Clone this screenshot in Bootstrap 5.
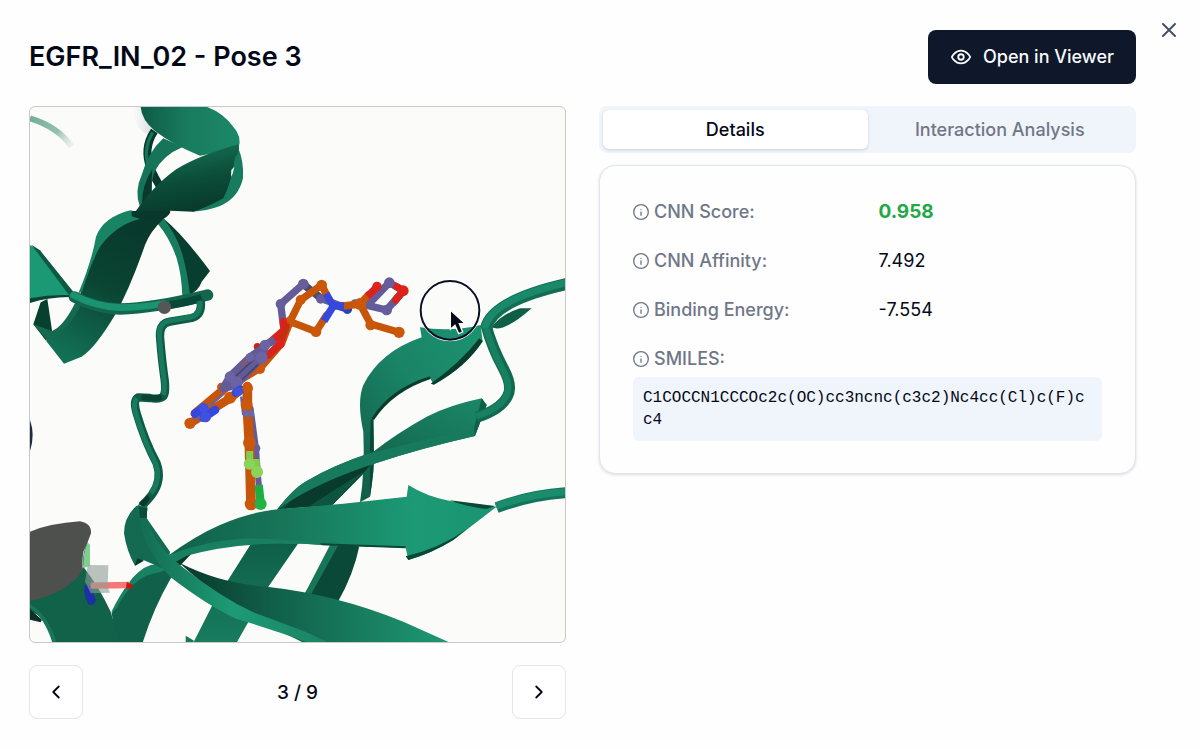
<!DOCTYPE html>
<html lang="en">
<head>
<meta charset="utf-8">
<meta name="viewport" content="width=device-width, initial-scale=1">
<title>EGFR_IN_02 - Pose 3</title>
<link href="https://cdn.jsdelivr.net/npm/bootstrap@5.3.0/dist/css/bootstrap.min.css" rel="stylesheet">
<style>
  body { font-family: Inter, "Liberation Sans", sans-serif; font-size: 18px; line-height: 27px; color: #020817; background: #fefefe; }
  svg.ico { fill: none; stroke: currentColor; stroke-width: 2; stroke-linecap: round; stroke-linejoin: round; flex: none; }
  .pose-dialog { padding: 30px 64px 30px 29px; }
  .pose-title { font-size: 27px; line-height: 32px; font-weight: 600; }
  .btn { font-size: 18px; line-height: 28px; font-weight: 500; }
  .btn-viewer { --bs-btn-color: #f8fafc; --bs-btn-bg: #0f172a; --bs-btn-hover-color: #fff; --bs-btn-hover-bg: #1e293b; padding: 12px 21px; border-radius: 8px; gap: 11px; }
  .btn-x { top: 18px; right: 19px; padding: 0; color: #475063; border: 0; width: 24px; height: 24px; line-height: 0; }
  .pose-body { display: grid; grid-template-columns: 1fr 1fr; gap: 33px; margin-top: 22px; align-items: start; }
  .scene { aspect-ratio: 1; border: 1px solid #c9cac5; border-radius: 6px; background: #fbfbf9; overflow: hidden; }
  .scene svg { display: block; width: 100%; height: 100%; }
  .pager { margin-top: 22px; font-size: 19px; font-weight: 500; }
  .btn-step { width: 54px; height: 54px; padding: 0; border: 1px solid #e2e4ee; border-radius: 8px; color: #020817; background: #fff; }
  .pose-tabs { background: #f0f4fb; border-radius: 8px; padding: 4px; }
  .pose-tabs .nav-link { padding: 6px 12px; line-height: 27px; font-weight: 500; color: #6f7787; border-radius: 6px; }
  .pose-tabs .nav-link.active { color: #020817; background: #fff; box-shadow: 0 1px 3px rgba(15,23,42,.16); }
  .facts { margin-top: 12px; padding: 32px 33px; border: 1px solid #e0e5ec; border-radius: 16px; background: #fefefe; box-shadow: 0 1px 3px rgba(15,23,42,.14); }
  .facts dl { display: grid; grid-template-columns: 1fr 1fr; gap: 22px; }
  .facts dt { font-weight: 500; color: #6f7787; gap: 5px; }
  .facts dd { margin: 0; }
  .facts .good { color: #22a845; font-size: 19px; font-weight: 700; }
  .facts .wide { grid-column: 1 / -1; }
  .smiles { margin-top: -17px !important; padding: 10px; border-radius: 6px; background: #f0f4fb; }
  .smiles code { display: block; font: 16px/22px "Liberation Mono", monospace; color: #020817; word-break: break-all; }
  @media (max-width: 760px) { .pose-body { grid-template-columns: 1fr; } }
</style>
</head>
<body>
<main class="pose-dialog position-relative">
  <button class="btn btn-x position-absolute" type="button" aria-label="Close">
    <svg class="ico" width="24" height="24" viewBox="0 0 24 24"><path d="M18 6 6 18M6 6l12 12"/></svg>
  </button>
  <header class="d-flex align-items-center justify-content-between">
    <h1 class="pose-title mb-0">EGFR_IN_02 - Pose 3</h1>
    <button class="btn btn-viewer d-flex align-items-center" type="button">
      <svg class="ico" width="22" height="22" viewBox="0 0 24 24"><path d="M2 12s3-7 10-7 10 7 10 7-3 7-10 7-10-7-10-7Z"/><circle cx="12" cy="12" r="3"/></svg>
      Open in Viewer
    </button>
  </header>

  <div class="pose-body">
    <section>
      <div class="scene">
        <svg viewBox="30 36 1605 1605" role="img" aria-label="Docked ligand in protein pocket">
          <defs>
            <linearGradient id="fade" x1="30" y1="60" x2="158" y2="155" gradientUnits="userSpaceOnUse"><stop stop-color="#6fae98"/><stop offset=".6" stop-color="#94bfb1"/><stop offset="1" stop-color="#d9dde0" stop-opacity=".3"/></linearGradient>
            <linearGradient id="top"><stop stop-color="#0d5c45"/><stop offset=".45" stop-color="#187a5d"/><stop offset="1" stop-color="#1b8967"/></linearGradient>
            <linearGradient id="diag" x1="0" y1=".1" x2=".25" y2="1"><stop stop-color="#167457"/><stop offset=".5" stop-color="#0c4f3b"/><stop offset="1" stop-color="#08382a"/></linearGradient>
            <linearGradient id="low" x1=".7" y1="0" x2=".3" y2="1"><stop stop-color="#08382b"/><stop offset=".5" stop-color="#0a4433"/><stop offset="1" stop-color="#127055"/></linearGradient>
            <linearGradient id="arrow"><stop stop-color="#0f6149"/><stop offset=".35" stop-color="#177558"/><stop offset=".75" stop-color="#1c9a75"/><stop offset="1" stop-color="#1a9370"/></linearGradient>
            <linearGradient id="sweep"><stop stop-color="#08382a"/><stop offset=".35" stop-color="#116049"/><stop offset="1" stop-color="#1e9974"/></linearGradient>
            <linearGradient id="band"><stop stop-color="#136b51"/><stop offset=".5" stop-color="#1d9a75"/><stop offset="1" stop-color="#1a8365"/></linearGradient>
            <linearGradient id="mid" x1="0" y1="1" x2="1" y2="0"><stop stop-color="#0d553f"/><stop offset=".5" stop-color="#15694f"/><stop offset="1" stop-color="#1b8868"/></linearGradient>
            <linearGradient id="down" x1="0" y1="0" x2="0" y2="1"><stop stop-color="#0f5f48"/><stop offset="1" stop-color="#187c5f"/></linearGradient>
            <linearGradient id="leaf" x1="0" y1="1" x2="1" y2="0"><stop stop-color="#115c46"/><stop offset=".55" stop-color="#1a8466"/><stop offset="1" stop-color="#1b9370"/></linearGradient>
            <linearGradient id="puff"><stop stop-color="#e2e5ea" stop-opacity="0"/><stop offset="1" stop-color="#d3d8df"/></linearGradient>
          </defs>

          <!-- far strands fading into fog -->
          <path d="M30 70Q115 96 155 155" fill="none" stroke="url(#fade)" stroke-width="18"/>
          <path d="M335 36h28q8 42 42 72l-30 8q-35-30-40-80Z" fill="url(#puff)"/>

          <!-- upper helix -->
          <path d="M403 108Q368 160 392 222Q408 255 422 278" fill="none" stroke="#07382b" stroke-width="24"/>
          <path d="M398 112Q368 160 386 218" fill="none" stroke="#157358" stroke-width="10"/>
          <path d="M430 130L488 156Q430 180 405 228Q393 255 395 302L360 335Q342 290 365 240Q385 170 430 130Z" fill="#167558"/>
          <path d="M397 222Q366 270 366 325L395 300V250Z" fill="#08392c"/>
          <path d="M362 36Q365 75 405 108Q460 150 540 182L655 160Q668 125 638 93Q610 55 562 36Z" fill="url(#top)"/>
          <path d="M655 160Q672 200 669 250Q655 310 600 333Q560 348 515 350L612 300Q630 240 632 175Z" fill="#177b5d"/>
          <path d="M335 366Q400 270 470 222Q540 180 655 148Q662 170 645 188Q635 260 610 310Q560 338 520 350L450 347Q400 378 350 374Z" fill="url(#diag)"/>
          <path d="M633 245L634 225L643 215L638 236Z" fill="#fbfbf9"/>

          <!-- lower helix -->
          <path d="M430 370Q490 420 570 528L545 560Q535 590 505 600L480 480Q460 430 430 370Z" fill="#083e2f"/>
          <path d="M412 385Q450 430 470 490Q485 540 487 604L510 600Q502 530 487 478Q470 420 430 370Z" fill="#187c5e"/>
          <path d="M335 348L450 347Q455 355 430 372Q390 410 375 450Q330 580 285 660Q225 760 185 785L132 806L78 737Q140 715 180 600Q215 480 235 440Q280 370 335 348Z" fill="url(#low)"/>
          <path d="M335 345Q250 365 228 425Q215 500 175 595L186 590Q215 500 240 455Q290 388 360 372L335 364Z" fill="#198463"/>
          <path d="M62 622L82 612L96 706L78 737L40 688Z" fill="#08402f"/>
          <path d="M40 688L96 708Q130 695 165 625L188 622Q145 710 82 737Z" fill="#14694f"/>
          <path d="M30 450L60 468L158 592L150 605Q90 600 30 612Z" fill="#1b9974"/>
          <path d="M34 449L60 466L160 590L147 600Z" fill="#0d5943"/>
          <path d="M30 610Q90 598 150 600V606Q80 608 30 624Z" fill="#0a4434"/>
          <path d="M163 606Q230 640 300 642Q400 640 563 600" fill="none" stroke="#12664d" stroke-width="34" stroke-linecap="round"/>
          <path d="M160 601Q230 636 300 638Q370 636 430 626" fill="none" stroke="#1b9370" stroke-width="20" stroke-linecap="round"/>
          <path d="M450 630Q510 620 545 608" fill="none" stroke="#094736" stroke-width="24"/>
          <circle cx="433" cy="637" r="20" fill="#555756"/>

          <!-- hanging loop -->
          <g fill="none" stroke-linejoin="round">
            <path d="M542 616Q548 660 515 669L450 680Q418 685 420 725Q425 790 432 840Q440 890 430 904Q420 914 390 909L355 907Q338 915 350 955Q375 1040 410 1105Q428 1155 395 1200Q380 1220 365 1232" stroke="#0f5a45" stroke-width="25"/>
            <path d="M540 618Q544 656 514 666L449 677Q415 684 418 725Q423 790 430 840Q437 887 429 899M350 910Q338 925 347 955Q372 1040 407 1105Q424 1153 393 1195" stroke="#177a5d" stroke-width="15"/>
            <path d="M425 906Q410 912 365 906" stroke="#0a4333" stroke-width="16"/>
          </g>

          <!-- right strand pair -->
          <path d="M1200 697Q1290 712 1382 690L1388 740Q1340 810 1240 868L1230 848Q1120 885 1060 965Q1062 1050 1062 1100Q1058 1160 1050 1205L1020 1222Q1035 1130 1030 1010Q1010 920 1030 870Q1080 770 1205 727Z" fill="url(#leaf)"/>
          <path d="M1388 738Q1340 815 1242 869L1232 866Q1320 805 1378 730ZM1230 844Q1110 880 1055 970L1062 975Q1120 888 1232 852Z" fill="#083d2e"/>
          <path d="M1052 975Q1048 1080 1050 1205L1060 1130Q1062 1050 1060 970Z" fill="#0a4836"/>
          <path d="M1385 910L1400 930L1365 1023Q1200 1060 1060 1107L940 1227L770 1245Q820 1180 860 1158Q940 1110 1060 1070Q1130 1015 1220 965Q1290 930 1385 910Z" fill="url(#mid)"/>
          <path d="M1055 1108L935 1232L790 1240Q850 1170 1055 1108Z" fill="#093b2c"/>
          <path d="M1030 1130L935 1232H870Z" fill="#0e5540"/>
          <path d="M775 1240Q820 1180 860 1158Q940 1110 1060 1072L1365 1000V1023Q1200 1060 1060 1107Q900 1160 800 1225Z" fill="#187a5c"/>
          <path d="M1385 910L1400 930L1365 1023L1362 1000Z" fill="#0f6049"/>
          <path d="M1370 967Q1440 945 1462 905Q1480 875 1450 820Q1415 755 1398 690" fill="none" stroke="#11694f" stroke-width="33"/>
          <path d="M1370 963Q1437 942 1458 904Q1475 875 1447 821Q1412 755 1396 690" fill="none" stroke="#178061" stroke-width="20"/>
          <path d="M1415 697Q1450 715 1535 640L1500 640Q1440 660 1415 697Z" fill="#0f5f48"/>
          <path d="M1640 567Q1415 618 1398 700" fill="none" stroke="#126d52" stroke-width="36"/>
          <path d="M1640 563Q1411 614 1394 700" fill="none" stroke="#19896a" stroke-width="22"/>

          <!-- strands running down behind the arrow -->
          <path d="M940 1350L1018 1354Q1000 1440 955 1518L855 1495Z" fill="#0a4937"/>
          <path d="M930 1350H955L872 1500L855 1495Z" fill="#177658"/>
          <path d="M695 1343L835 1345L745 1475L650 1643H520L580 1525Z" fill="url(#down)"/>
          <path d="M497 1622L522 1637L518 1643H497Z" fill="#177658"/>
          <path d="M450 1430Q390 1390 335 1455Q300 1500 275 1555L290 1643H368Q400 1540 455 1445Z" fill="#10604a"/>
          <path d="M450 1420Q395 1385 338 1448Q300 1495 273 1553L290 1540Q340 1440 420 1432Z" fill="#198263"/>
          <path d="M445 1395L520 1370L480 1412L600 1500L450 1430Z" fill="#083829"/>
          <path d="M478 1403Q600 1465 740 1475Q950 1498 1150 1580L1290 1643H850Q600 1520 478 1403Z" fill="url(#sweep)"/>
          <path d="M440 1385Q530 1320 600 1290Q700 1245 810 1240L970 1226L1160 1205L1165 1170Q1220 1205 1290 1218L1430 1235L1300 1335Q1235 1375 1165 1395L1157 1358L910 1350Q680 1330 500 1380L465 1400Z" fill="url(#arrow)"/>
          <path d="M440 1383Q560 1335 690 1330Q800 1335 960 1342L905 1350Q680 1333 500 1382L465 1402Z" fill="#188060"/>
          <path d="M1165 1395Q1235 1375 1300 1335L1340 1303Q1260 1360 1157 1384ZM900 1345L1157 1354V1360L905 1351ZM1290 1216L1425 1233L1400 1242Q1340 1236 1280 1213Z" fill="#0a4736"/>
          <path d="M350 1232Q312 1265 312 1315Q320 1370 345 1412L370 1395L440 1425L450 1370L380 1270L382 1232Z" fill="#136a50"/>
          <path d="M345 1412L352 1390L372 1397ZM355 1228L383 1200L390 1212L372 1236Z" fill="#08382a"/>
          <path d="M355 1230L382 1238L380 1268L400 1320Q430 1372 490 1418Q600 1505 700 1552L860 1612L925 1643H865Q760 1604 650 1572Q560 1530 450 1445Q365 1360 350 1235Z" fill="url(#band)"/>
          <path d="M357 1235L382 1240L380 1268L360 1270Z" fill="#0b4b39"/>
          <path d="M1430 1238Q1530 1200 1640 1193" fill="none" stroke="#14735a" stroke-width="33"/>
          <path d="M1428 1234Q1530 1197 1640 1190" fill="none" stroke="#1a8e6c" stroke-width="21"/>

          <!-- near clipped surface and axis gizmo -->
          <path d="M190 1415Q240 1480 272 1550L300 1643H105Q80 1560 30 1550V1515Q150 1490 190 1415Z" fill="#116249"/>
          <path d="M30 1543L66 1574L62 1582L30 1574Z" fill="#0c2f27"/>
          <path d="M30 1528Q85 1560 110 1643H97Q75 1570 30 1538Z" fill="#18765a"/>
          <path d="M30 1310Q90 1285 180 1279Q215 1285 213 1315Q205 1340 190 1370Q185 1410 188 1425Q150 1490 30 1518Z" fill="#4e504e"/>
          <path d="M203 1340Q187 1370 188 1420L200 1390Z" fill="#0a5a43"/>
          <path d="M203 1342L210 1350V1412L190 1420Q188 1375 203 1342Z" fill="#80cf91"/>
          <path d="M194 1470Q205 1465 215 1480L228 1515Q222 1535 205 1528Q188 1495 194 1470Z" fill="#1c30a5"/>
          <path d="M212 1472L330 1470" stroke="#f57876" stroke-width="19"/>
          <path d="M320 1461L340 1470L334 1481H318Z" fill="#bd1915"/>
          <path d="M203 1410L265 1411L263 1475L270 1493L212 1495L195 1460Z" fill="#8d9c95" fill-opacity=".6"/>
          <path d="M30 975Q46 1020 30 1068Z" fill="#1d2c40"/>

          <!-- reference ligand, purple carbons -->
          <g fill="none" stroke="#635c98" stroke-width="22" stroke-linecap="round" stroke-linejoin="round">
            <path d="M790 690L782 627L850 567L902 610L982 640"/>
            <path d="M858 575L902 608" stroke="#4c4b68"/>
            <path d="M1005 628L1045 628L1108 563M1045 632L1100 645L1150 587"/>
            <path d="M1108 563L1150 587L1122 622" stroke="#635c98"/>
            <path d="M1128 574L1150 587L1127 615" stroke="#d8221c"/>
            <path d="M960 635L985 643" stroke="#2944b8"/>
            <path d="M692 940L708 1060L714 1140L718 1190" stroke-width="18"/>
          </g>
          <g fill="#655e9b"><circle cx="782" cy="627" r="15"/><circle cx="850" cy="567" r="16"/><circle cx="902" cy="612" r="14"/><circle cx="1108" cy="563" r="16"/><circle cx="1100" cy="645" r="16"/><circle cx="1005" cy="626" r="13"/><circle cx="708" cy="1060" r="13"/></g>
          <circle cx="982" cy="644" r="13" fill="#2944b8"/><circle cx="1150" cy="587" r="16" fill="#dc241d"/>

          <!-- docked ligand, orange carbons -->
          <g fill="none" stroke="#c65509" stroke-width="22" stroke-linecap="round" stroke-linejoin="round">
            <path d="M920 600L905 570L842 615L810 680L888 710L920 660M970 633L1020 627L1052 687L1137 712M1020 627L1045 600M810 680L785 745L720 820L635 870"/>
            <path d="M510 985L630 910L655 890M525 955L615 880" stroke-width="26"/>
            <path d="M682 875V940L688 1043L693 1227" stroke-width="29"/>
          </g>
          <path d="M918 596L940 633L912 678M940 633H972" fill="none" stroke="#3547dc" stroke-width="22" stroke-linejoin="round"/>
          <path d="M1042 604L1070 577" stroke="#d8221c" stroke-width="22"/>
          <g fill="#cb580a"><circle cx="905" cy="570" r="16"/><circle cx="842" cy="615" r="15"/><circle cx="810" cy="680" r="16"/><circle cx="888" cy="710" r="16"/><circle cx="1020" cy="627" r="18"/><circle cx="1052" cy="690" r="16"/><circle cx="1137" cy="712" r="17"/><circle cx="720" cy="822" r="15"/><circle cx="510" cy="985" r="17"/><circle cx="630" cy="908" r="18"/><circle cx="604" cy="876" r="13"/></g>
          <circle cx="1071" cy="574" r="14" fill="#dc241d"/>

          <!-- ether bridge -->
          <g fill="none" stroke-linecap="round">
            <path d="M790 680L792 705L750 742M798 695L780 747L745 780" stroke="#d8221c" stroke-width="22"/>
            <path d="M806 690L778 740" stroke="#b5360b" stroke-width="8"/>
            <path d="M765 735L735 750" stroke="#635c98" stroke-width="24" stroke-linecap="butt"/>
          </g>
          <circle cx="712" cy="755" r="11" fill="#c9201a"/><circle cx="780" cy="747" r="14" fill="#dc241d"/>

          <!-- quinazoline core seen edge-on -->
          <path d="M735 755L690 787L630 845L610 880L650 868L725 787ZM690 800L635 855" fill="#5c5690" stroke="#625b97" stroke-width="24" stroke-linejoin="round"/>
          <path d="M700 795L640 850M715 808L665 855" stroke="#484370" stroke-width="5"/>
          <path d="M685 792L665 811" stroke="#b0562d" stroke-width="5"/>
          <g fill="#6b64a3"><circle cx="735" cy="750" r="16"/><circle cx="725" cy="788" r="18"/><circle cx="690" cy="787" r="13"/><circle cx="630" cy="845" r="16"/><circle cx="650" cy="862" r="18"/></g>
          <g fill="none" stroke="#3547dc" stroke-width="26" stroke-linecap="round"><path d="M525 956L552 938M550 968L585 945M648 893L662 884"/></g>
          <path d="M523 975L540 966M568 934L612 895" stroke="#6a639e" stroke-width="7"/>
          <g fill="#3f52df"><circle cx="550" cy="938" r="14"/><circle cx="557" cy="966" r="16"/><circle cx="655" cy="890" r="13"/></g>

          <!-- halogenated ring -->
          <path d="M664 905L670 960M678 943H694" stroke="#6660a0" stroke-width="8"/>
          <g fill="#cb580a"><circle cx="683" cy="880" r="16"/><circle cx="680" cy="930" r="18"/><circle cx="688" cy="1043" r="19"/><circle cx="693" cy="1227" r="19"/></g>
          <path d="M667 947H702V963Q685 970 670 962Z" fill="#6d67a5"/>
          <path d="M716 1170L722 1225" stroke="#20ad40" stroke-width="25"/><circle cx="722" cy="1227" r="18" fill="#22b344"/>
          <path d="M689 1068V1105M709 1092V1130" stroke="#80cc4c" stroke-width="21"/>
          <circle cx="688" cy="1107" r="17" fill="#8cd35a"/><circle cx="711" cy="1131" r="18" fill="#8cd35a"/>

          <!-- pointer -->
          <circle cx="1290" cy="646" r="91" fill="none" stroke="#fff" stroke-width="4"/>
          <circle cx="1290" cy="646" r="88" fill="none" stroke="#0b0f22" stroke-width="6"/>
          <path d="M1291 645V703L1305 691L1316 716L1328 711L1318 686H1336Z" fill="#060a18" stroke="#fff" stroke-width="4"/>
        </svg>
      </div>
      <nav class="pager d-flex align-items-center justify-content-between" aria-label="Poses">
        <button class="btn btn-step d-flex align-items-center justify-content-center" type="button" aria-label="Previous pose"><svg class="ico" width="22" height="22" viewBox="0 0 24 24"><path d="m15 18-6-6 6-6"/></svg></button>
        <span>3 / 9</span>
        <button class="btn btn-step d-flex align-items-center justify-content-center" type="button" aria-label="Next pose"><svg class="ico" width="22" height="22" viewBox="0 0 24 24"><path d="m9 18 6-6-6-6"/></svg></button>
      </nav>
    </section>

    <section>
      <div class="nav nav-pills nav-fill pose-tabs" role="tablist">
        <button class="nav-link active flex-fill w-50" type="button" role="tab" aria-selected="true">Details</button>
        <button class="nav-link flex-fill w-50" type="button" role="tab" aria-selected="false">Interaction Analysis</button>
      </div>
      <div class="facts">
        <dl class="mb-0">
          <dt class="d-flex align-items-center"><svg class="ico" width="16" height="16" viewBox="0 0 24 24"><circle cx="12" cy="12" r="11"/><path d="M12 17v-5M12 8h.01"/></svg>CNN Score:</dt>
          <dd class="good">0.958</dd>
          <dt class="d-flex align-items-center"><svg class="ico" width="16" height="16" viewBox="0 0 24 24"><circle cx="12" cy="12" r="11"/><path d="M12 17v-5M12 8h.01"/></svg>CNN Affinity:</dt>
          <dd>7.492</dd>
          <dt class="d-flex align-items-center"><svg class="ico" width="16" height="16" viewBox="0 0 24 24"><circle cx="12" cy="12" r="11"/><path d="M12 17v-5M12 8h.01"/></svg>Binding Energy:</dt>
          <dd>-7.554</dd>
          <dt class="d-flex align-items-center wide"><svg class="ico" width="16" height="16" viewBox="0 0 24 24"><circle cx="12" cy="12" r="11"/><path d="M12 17v-5M12 8h.01"/></svg>SMILES:</dt>
          <dd class="wide smiles"><code>C1COCCN1CCCOc2c(OC)cc3ncnc(c3c2)Nc4cc(Cl)c(F)cc4</code></dd>
        </dl>
      </div>
    </section>
  </div>
</main>
<script src="https://cdn.jsdelivr.net/npm/bootstrap@5.3.0/dist/js/bootstrap.bundle.min.js"></script>
</body>
</html>
